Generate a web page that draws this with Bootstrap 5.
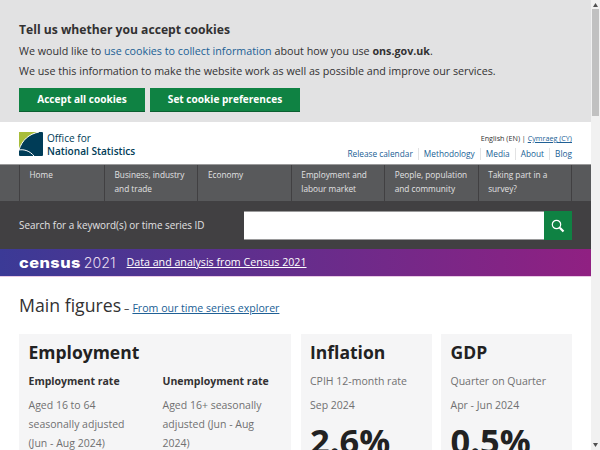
<!DOCTYPE html>
<html lang="en"><head><meta charset="utf-8"><title>ONS</title>
<link href="https://cdn.jsdelivr.net/npm/bootstrap@5.3.0/dist/css/bootstrap.min.css" rel="stylesheet">
<style>
html,body{height:450px;overflow:hidden;margin:0}
body{font-family:"Open Sans",sans-serif;font-size:11px;color:#323132;background:#f1f1f1}
.pagewrap{width:591px;height:450px;overflow:hidden;background:#fff}
.cookiebar{background:#e2e2e3;height:122px;padding:21px 19px 0}
.cookiebar h2{font-size:12.15px;font-weight:700;line-height:17px;margin:0 0 4px;color:#323132}
.cookiebar p{font-size:10.72px;line-height:19.5px;margin:0}
.cookielink{color:#206095;text-decoration:none}
.cookiebtns{margin-top:7px;gap:5px}
.onsbtn{background:#0f8243;border:0;border-bottom:1px solid #0b5f31;border-radius:0;color:#fff;font-weight:700;font-size:10.1px;height:24px;padding:0;line-height:21px}
.onsbtn.b1{width:126px}.onsbtn.b2{width:150px}
.headrow{height:42px;padding:10px 19px 0}
.logotxt{font-size:10.1px;line-height:12.6px;color:#003c57;margin-left:4px}
.logotxt b{font-weight:600;display:block}
.langline{font-size:7.2px;line-height:11px;color:#323132;text-align:right;margin-top:1px}
.langline a,.toplinks a{color:#206095}
.langline a{text-decoration:underline}
.toplinks{font-size:8.3px;line-height:12px;margin-top:4px}
.toplinks a{text-decoration:none;padding:0 5px;border-left:1px solid #e2e2e3}
.toplinks a:first-child{border:0}.toplinks a:last-child{padding-right:0}
.mainnav{background:#58595b;border-top:1px solid #9a9a9b;height:37px;padding:0 19px}
.navcell{flex:1 1 0;border-left:1px solid #414042;padding:3px 5px 0 9.5px;color:#e2e2e3;font-size:8.25px;line-height:14px;min-width:0}
.navcell:first-child{flex:0 0 85px}
.navcell:last-child{border-right:1px solid #414042}
.searchbar{background:#414042;height:48px;padding:10px 19px 0 19px;color:#e2e2e3;font-size:9.9px}
.searchlabel{width:225px;line-height:29px}
.searchbox{width:300px;height:29px;background:#fff;border-bottom:1px solid #9a9a9b;border-top:1px solid #9a9a9b}
.searchgo{width:28px;height:29px;background:#0f8243;border:0;padding:0}
.censusband{height:28px;background:linear-gradient(90deg,#3b3a96 0,#902082 100%);padding:0 19px;border-bottom:1px solid #e9c9e4;color:#fff}
.censusword{font-family:Inter,sans-serif;font-weight:800;font-size:14.5px;letter-spacing:.4px;line-height:27px;display:inline-block;transform:scaleX(1.13);transform-origin:left center;margin-right:7px}
.censusyear{font-family:Inter,sans-serif;font-weight:300;font-size:14.2px;line-height:27px;margin-left:3px;color:#e8dcef}
.censuslink{color:#fff;font-size:10.66px;margin-left:11px;text-decoration:underline}
.figbody{padding:15px 19px 0}
.figtitle{font-size:17.7px;line-height:26px;font-weight:400;color:#323132;margin:0;height:42px}
.figtitle a{font-size:10.6px;color:#206095;text-decoration:underline;margin-left:3px}
.figtitle span{font-size:10.6px;margin-left:3px}
.figcards{gap:9.5px}
.figcard{background:#f5f5f6;padding:6px 9.5px 0;height:200px;flex:0 0 131px;min-width:0}
.figcard.wide{flex:0 0 272px}
.figcard h3{font-size:17.5px;font-weight:700;line-height:24px;margin:0 0 8px;color:#222}
.figcard h4{font-size:10.5px;font-weight:700;line-height:19px;margin:0 0 5px;color:#323132}
.figcard p{font-size:10.5px;line-height:19px;color:#707071;margin:0}
.figcard p.gap{margin-bottom:4.5px}
.bignum{font-size:34.4px;font-weight:700;line-height:40px;color:#222;margin-top:6px}
.widecols>div{flex:0 0 134px;padding-right:30px}
.widecols>div+div{flex:0 0 118px;padding-right:0}
.sbar{position:fixed;right:0;top:0;width:9px;height:450px;background:#f1f1f1}
.sbar i{position:absolute;left:1px;right:1px;top:9px;height:107px;background:#c1c1c1}
.sbar svg{position:absolute;left:2px;width:5px;height:4px}
</style></head><body>
<div class="pagewrap">
<div class="cookiebar">
<h2>Tell us whether you accept cookies</h2>
<p>We would like to <a class="cookielink" href="#">use cookies to collect information</a> about how you use <strong>ons.gov.uk</strong>.</p>
<p>We use this information to make the website work as well as possible and improve our services.</p>
<div class="cookiebtns d-flex"><button class="btn onsbtn b1">Accept all cookies</button><button class="btn onsbtn b2">Set cookie preferences</button></div>
</div>
<div class="headrow d-flex justify-content-between">
<div class="d-flex"><svg width="24" height="24" viewBox="0 0 24 24"><rect width="24" height="24" rx="1" fill="#003c57"/><path d="M0 0H20C10 2 3 8 0 18Z" fill="#a8bd3a"/><path d="M0 18C3 8 10 2 20 0" stroke="#fff" stroke-width="1" fill="none"/><path d="M0 18C5 17 11 19 15 24" stroke="#fff" stroke-width="1" fill="none"/></svg>
<div class="logotxt">Office for<b>National Statistics</b></div></div>
<div><div class="langline">English (EN) | <a href="#">Cymraeg (CY)</a></div>
<div class="toplinks d-flex justify-content-end"><a href="#">Release calendar</a><a href="#">Methodology</a><a href="#">Media</a><a href="#">About</a><a href="#">Blog</a></div></div>
</div>
<div class="mainnav d-flex">
<div class="navcell">Home</div><div class="navcell">Business, industry and trade</div><div class="navcell">Economy</div><div class="navcell">Employment and labour market</div><div class="navcell">People, population and community</div><div class="navcell">Taking part in a survey?</div>
</div>
<div class="searchbar d-flex">
<div class="searchlabel">Search for a keyword(s) or time series ID</div>
<div class="searchbox"></div>
<button class="searchgo d-flex align-items-center justify-content-center" aria-label="Search"><svg width="14" height="14" viewBox="0 0 14 14"><circle cx="5.5" cy="5.5" r="4.2" fill="none" stroke="#fff" stroke-width="1.2"/><path d="M8.8 8.8 12.5 12.5" stroke="#fff" stroke-width="2.2"/></svg></button>
</div>
<div class="censusband d-flex align-items-center">
<span class="censusword">census</span><span class="censusyear">2021</span><a class="censuslink" href="#">Data and analysis from Census 2021</a>
</div>
<div class="figbody">
<h2 class="figtitle">Main figures<span>–</span><a href="#">From our time series explorer</a></h2>
<div class="figcards d-flex">
<div class="figcard wide"><h3>Employment</h3>
<div class="widecols d-flex">
<div><h4>Employment rate</h4><p>Aged 16 to 64 seasonally adjusted (Jun - Aug 2024)</p></div>
<div><h4>Unemployment rate</h4><p>Aged 16+ seasonally adjusted (Jun - Aug 2024)</p></div>
</div></div>
<div class="figcard"><h3>Inflation</h3><p class="gap">CPIH 12-month rate</p><p>Sep 2024</p><div class="bignum">2.6%</div></div>
<div class="figcard"><h3>GDP</h3><p class="gap">Quarter on Quarter</p><p>Apr - Jun 2024</p><div class="bignum">0.5%</div></div>
</div>
</div>
</div>
<div class="sbar"><svg style="top:3px" viewBox="0 0 5 4"><path d="M2.5 0 5 4H0Z" fill="#505050"/></svg><i></i><svg style="bottom:3px" viewBox="0 0 5 4"><path d="M0 0H5L2.5 4Z" fill="#505050"/></svg></div>
</body></html>
